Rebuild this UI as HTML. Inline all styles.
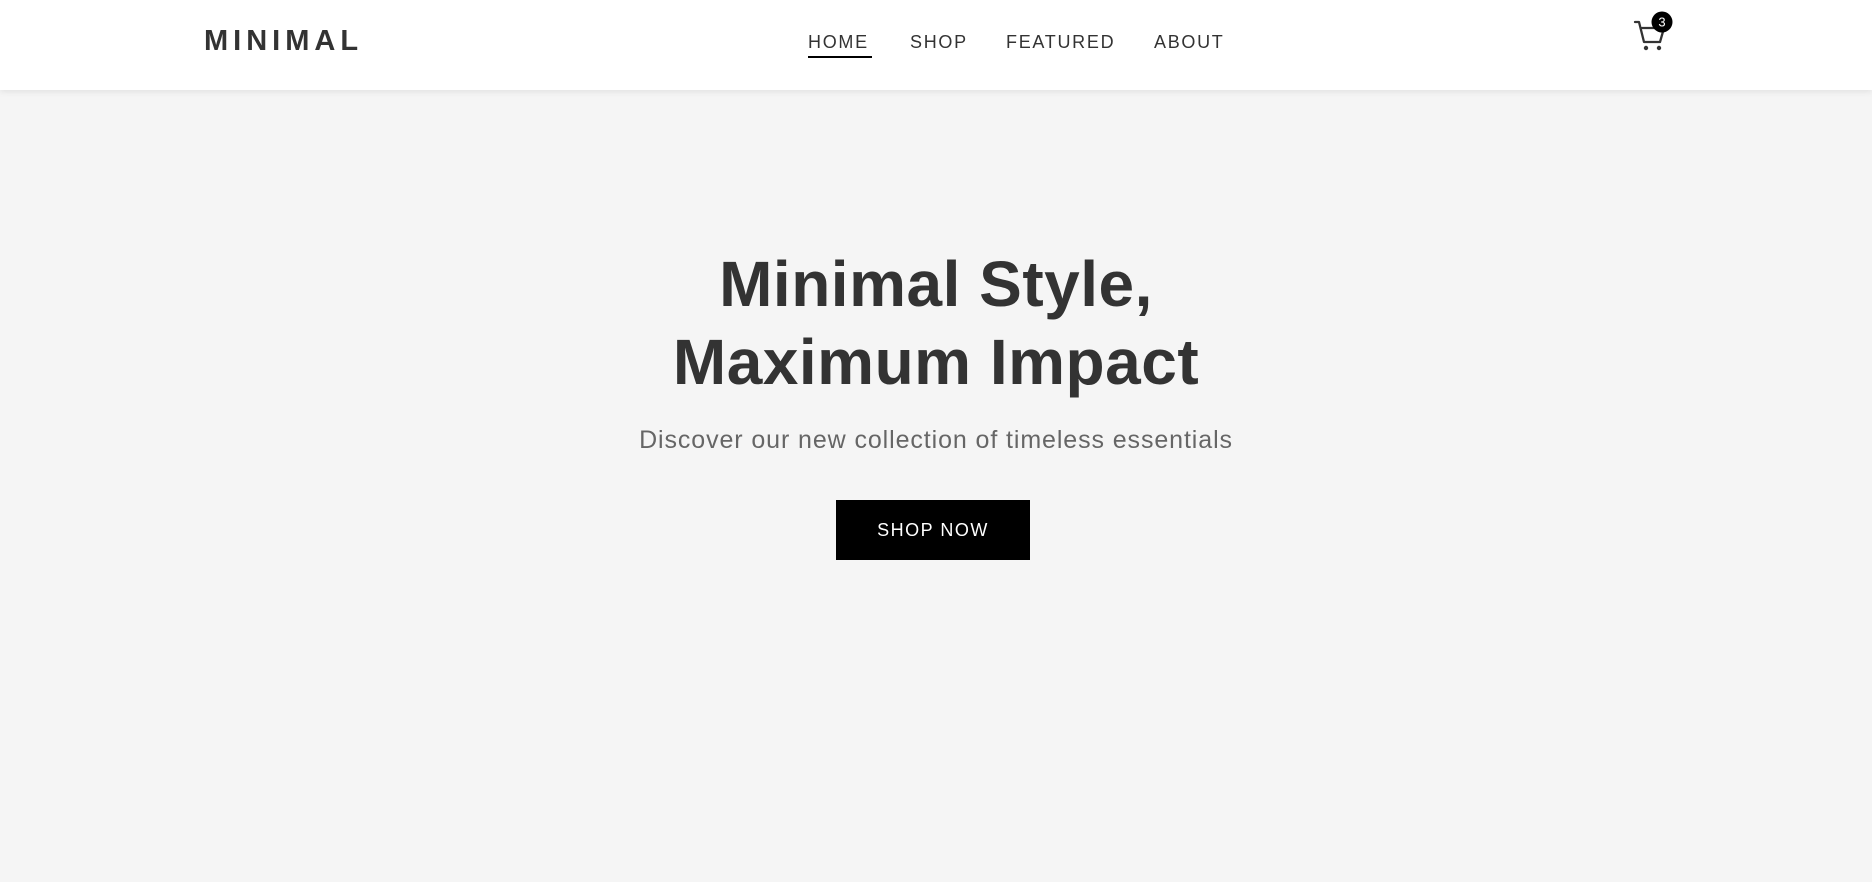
<!DOCTYPE html>
<html><head><meta charset="utf-8"><style>
*{margin:0;padding:0;box-sizing:border-box}
body{width:1872px;height:882px;overflow:hidden;background:#f5f5f5;font-family:"Liberation Sans",sans-serif;color:#333}
header{position:absolute;left:0;top:0;width:1872px;height:90px;background:#fff;box-shadow:0 2px 6px rgba(0,0,0,.08)}
.logo{position:absolute;left:204px;top:25px;font-size:29px;font-weight:bold;letter-spacing:5px;color:#333}
nav a{position:absolute;top:32px;font-size:18px;letter-spacing:1.7px;color:#333;text-decoration:none}
.ul{position:absolute;left:808px;top:56px;width:64px;height:2px;background:#000}
h1{position:absolute;left:0;width:1872px;text-align:center;font-size:64px;font-weight:bold;line-height:78px;top:245px;color:#333;letter-spacing:.5px}
p{position:absolute;left:0;width:1872px;text-align:center;top:426px;font-size:25px;color:#666;letter-spacing:.9px}
.btn{position:absolute;left:836px;top:500px;width:194px;height:60px;background:#000;color:#fff;font-size:18px;letter-spacing:1.5px;text-align:center;line-height:60px}
</style></head><body>
<header>
<div class="logo">MINIMAL</div>
<nav>
<a style="left:808px">HOME</a>
<a style="left:910px">SHOP</a>
<a style="left:1006px">FEATURED</a>
<a style="left:1154px">ABOUT</a>
</nav>
<div class="ul"></div>
<svg style="position:absolute;left:1630px;top:10px" width="50" height="46" viewBox="0 0 50 46">
<path d="M5 12 H9 L14 32 H30 L34 18 H12" fill="none" stroke="#333" stroke-width="2.3" stroke-linejoin="round" stroke-linecap="round"/>
<circle cx="16" cy="38" r="2.2" fill="#333"/><circle cx="29" cy="38" r="2.2" fill="#333"/>
<circle cx="32" cy="12" r="10.5" fill="#000"/>
<text x="32" y="16.5" text-anchor="middle" font-family="Liberation Sans" font-size="13" fill="#fff">3</text>
</svg>
</header>
<h1>Minimal Style,<br>Maximum Impact</h1>
<p>Discover our new collection of timeless essentials</p>
<div class="btn">SHOP NOW</div>
</body></html>
